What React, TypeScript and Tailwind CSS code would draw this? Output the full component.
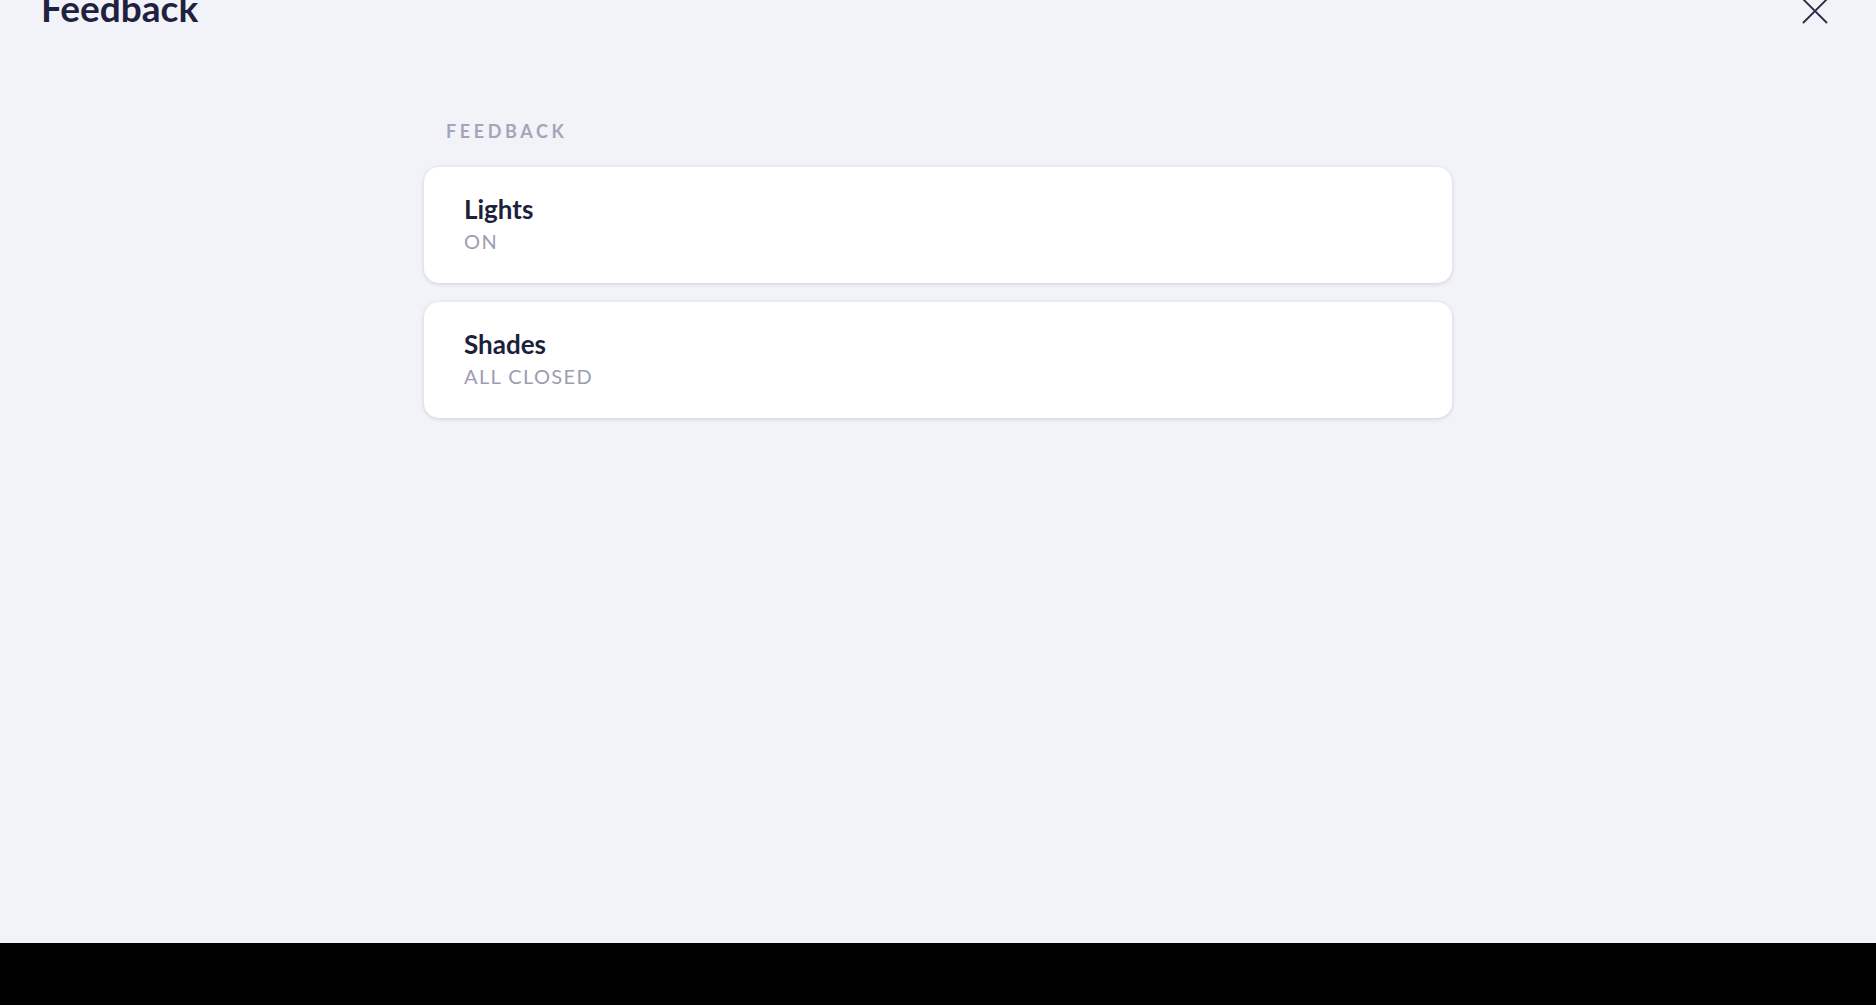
type Item = { title: string; status: string }

const items: Item[] = [
  { title: 'Lights', status: 'ON' },
  { title: 'Shades', status: 'ALL CLOSED' },
]

function CloseIcon() {
  return (
    <svg width="24" height="24" viewBox="0 0 24 24" className="overflow-visible" fill="none" stroke="currentColor" strokeWidth="1.8" strokeLinecap="round">
      <path d="M0.5 0.5 L23.5 23.5 M23.5 0.5 L0.5 23.5" />
    </svg>
  )
}

function FeedbackCard({ item }: { item: Item }) {
  return (
    <div className="bg-white rounded-[15px] shadow-[0_1px_4px_rgba(20,22,60,0.16)] pl-[40px] pt-[29px] h-[116px]">
      <p className="text-[26px] leading-none font-bold text-[#1d1f3b]">{item.title}</p>
      <p className="mt-[9px] text-[20px] leading-none tracking-[0.07em] text-[#9b9db3]">{item.status}</p>
    </div>
  )
}

export default function App() {
  return (
    <div className="h-screen flex flex-col overflow-hidden font-['Lato',sans-serif]">
      <div className="h-[943px] bg-[#f2f3f8] overflow-hidden">
        <header className="-mt-[11px] pl-[41px] pr-[49px] flex items-start justify-between">
          <h1 className="text-[37px] leading-none font-bold text-[#1f2140]">Feedback</h1>
          <button className="text-[#2b2d4a] mt-[10px]" aria-label="Close">
            <CloseIcon />
          </button>
        </header>

        <section className="w-[1028px] mx-auto mt-[96px]">
          <h2 className="pl-[22px] text-[18px] leading-none font-bold tracking-[0.2em] text-[#a3a5b9]">
            FEEDBACK
          </h2>
          <div className="mt-[27px] flex flex-col gap-[19px]">
            {items.map((item) => (
              <FeedbackCard key={item.title} item={item} />
            ))}
          </div>
        </section>
      </div>
      <div className="flex-1 bg-black" />
    </div>
  )
}
